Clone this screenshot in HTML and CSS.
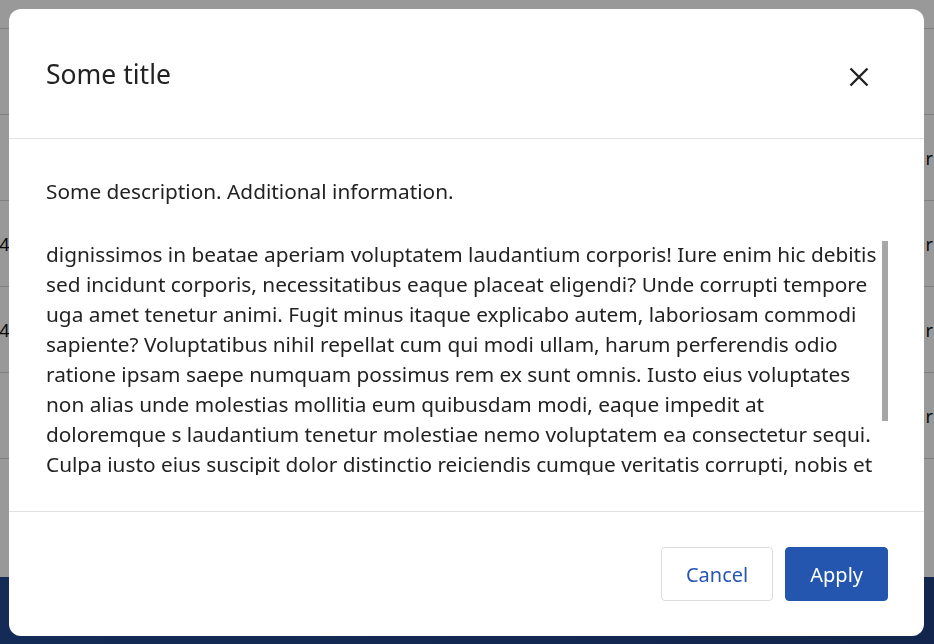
FILE: index.html
```html
<!DOCTYPE html>
<html lang="en">
<head>
<meta charset="utf-8">
<title>Dialog</title>
<link rel="stylesheet" href="styles.css">
</head>
<body>
<div class="page">
  <div class="topbar"></div>
  <div class="table">
    <div class="row"><span class="cell-l"></span><span class="cell-r"></span></div>
    <div class="row"><span class="cell-l"></span><span class="cell-r">r</span></div>
    <div class="row"><span class="cell-l">14</span><span class="cell-r">r</span></div>
    <div class="row"><span class="cell-l">14</span><span class="cell-r">r</span></div>
    <div class="row"><span class="cell-l"></span><span class="cell-r">r</span></div>
  </div>
  <div class="spacer"></div>
  <div class="footer-bar"></div>
</div>
<div class="overlay"></div>
<div class="modal" role="dialog" aria-labelledby="dlg-title">
  <header class="modal-header">
    <h2 class="modal-title" id="dlg-title">Some title</h2>
    <button class="close" aria-label="Close">
      <svg width="20" height="20" viewBox="0 0 20 20"><path d="M1.5 1.5 L18.5 18.5 M18.5 1.5 L1.5 18.5" stroke="#222" stroke-width="2.4" fill="none"/></svg>
    </button>
  </header>
  <div class="modal-body">
    <p class="description">Some description. Additional information.</p>
    <div class="scroll-wrap">
      <div class="scroll">
        <p>dignissimos in beatae aperiam voluptatem laudantium corporis! Iure enim hic debitis sed incidunt corporis, necessitatibus eaque placeat eligendi? Unde corrupti tempore uga amet tenetur animi. Fugit minus itaque explicabo autem, laboriosam commodi sapiente? Voluptatibus nihil repellat cum qui modi ullam, harum perferendis odio ratione ipsam saepe numquam possimus rem ex sunt omnis. Iusto eius voluptates non alias unde molestias mollitia eum quibusdam modi, eaque impedit at doloremque s laudantium tenetur molestiae nemo voluptatem ea consectetur sequi. Culpa iusto eius suscipit dolor distinctio reiciendis cumque veritatis corrupti, nobis et voluptas quia, quod aperiam ipsa ad dolores! Expedita, quaerat. Lorem ipsum dolor sit amet consectetur adipisicing elit, quas tempora.</p>
      </div>
      <div class="scroll-track"><div class="scroll-thumb"></div></div>
    </div>
  </div>
  <footer class="modal-footer">
    <button class="btn btn-secondary">Cancel</button>
    <button class="btn btn-primary">Apply</button>
  </footer>
</div>
</body>
</html>
```

FILE: styles.css
```css
* { box-sizing: border-box; }

html, body {
  margin: 0;
  padding: 0;
  height: 100%;
  overflow: hidden;
}

body {
  font-family: "Noto Sans", "Open Sans", sans-serif;
  color: #222;
  background: #fff;
}

.page {
  height: 100vh;
  display: flex;
  flex-direction: column;
}

.topbar {
  height: 29px;
  border-bottom: 1px solid #d6d6d6;
  flex: none;
}

.table {
  flex: none;
  display: flex;
  flex-direction: column;
}

.row {
  height: 86px;
  border-bottom: 1px solid #d6d6d6;
  display: flex;
  align-items: center;
  justify-content: space-between;
  margin: 0 0 0 -11px;
  padding-right: 1px;
  font-size: 18px;
  color: #111;
}

.spacer { flex: 1; }

.footer-bar {
  height: 67px;
  flex: none;
  background: linear-gradient(90deg, #21498f, #1f3f80);
}

.overlay {
  position: fixed;
  inset: 0;
  background: rgba(0, 0, 0, 0.4);
}

.modal {
  position: fixed;
  left: 9px;
  top: 9px;
  width: 915px;
  height: 627px;
  background: #fff;
  border-radius: 12px;
  display: flex;
  flex-direction: column;
  overflow: hidden;
}

.modal-header {
  height: 130px;
  flex: none;
  border-bottom: 1px solid #e2e2e2;
  padding: 0 55px 0 37px;
  display: flex;
  align-items: center;
  justify-content: space-between;
}

.modal-title {
  margin: 0;
  font-size: 26.5px;
  font-weight: 400;
  color: #222;
}

.close {
  width: 20px;
  height: 20px;
  padding: 0;
  border: 0;
  background: none;
  margin-top: 7px;
  display: flex;
}

.modal-body {
  flex: 1;
  min-height: 0;
  padding: 37px 36px 36px 37px;
  display: flex;
  flex-direction: column;
  font-size: 20.8px;
  line-height: 30px;
  color: #222;
}

.description {
  margin: 0 0 33px;
}

.scroll-wrap {
  flex: 1;
  min-height: 0;
  display: flex;
}

.scroll {
  flex: 1;
  min-width: 0;
  overflow: hidden;
}

.scroll p { margin: 0; }

.scroll-track {
  width: 6px;
  flex: none;
  padding-top: 2px;
}

.scroll-thumb {
  height: 180px;
  background: #a6a6a6;
}

.modal-footer {
  flex: none;
  border-top: 1px solid #e2e2e2;
  padding: 35px 36px;
  display: flex;
  justify-content: flex-end;
  gap: 12px;
}

.btn {
  height: 54px;
  padding: 0 24px;
  border-radius: 4px;
  font-family: inherit;
  font-size: 20px;
  border: 1px solid transparent;
}

.btn-secondary {
  background: #fff;
  border-color: #dcdcdc;
  color: #2656b2;
}

.btn-primary {
  background: #2456b0;
  border-color: #2456b0;
  color: #fff;
}
```
